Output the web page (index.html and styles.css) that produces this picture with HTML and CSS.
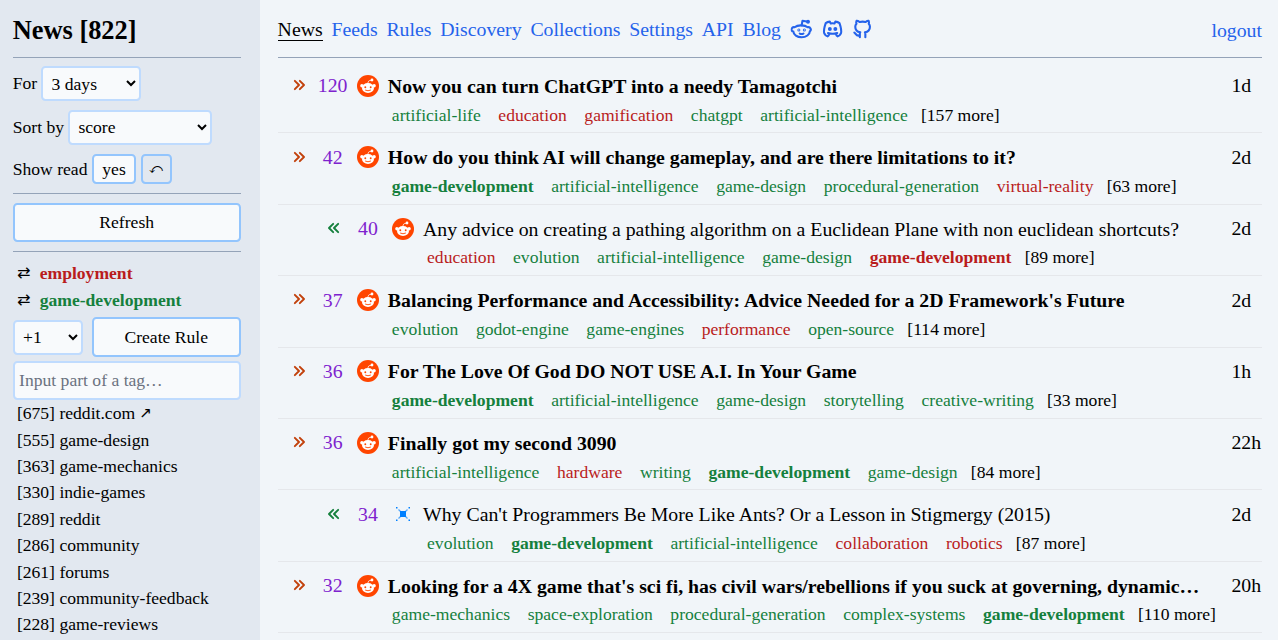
FILE: index.html
```html
<!DOCTYPE html>
<html lang="en">
<head>
<meta charset="utf-8">
<title>News</title>
<link rel="stylesheet" href="styles.css">
</head>
<body>
<svg class="sprite" aria-hidden="true">
  <symbol id="reddit" viewBox="0 0 22 22">
    <circle cx="11" cy="11" r="11" fill="#ff4500"/>
    <path d="M10.900 9C11 6.500 11.500 5.200 14.500 5.300" fill="none" stroke="#fff" stroke-width=".8"/>
    <circle cx="15" cy="5" r="1.400" fill="#fff"/>
    <circle cx="4.900" cy="10.700" r="1.700" fill="#fff"/>
    <circle cx="17.100" cy="10.700" r="1.700" fill="#fff"/>
    <ellipse cx="11" cy="13" rx="6" ry="4.900" fill="#fff"/>
    <circle cx="8.300" cy="12.200" r=".95" fill="#ff4500"/>
    <circle cx="13.700" cy="12.200" r=".95" fill="#ff4500"/>
    <path d="M8.500 15.200Q11 16.500 13.500 15.200" fill="none" stroke="#ff4500" stroke-width=".9" stroke-linecap="round"/>
  </symbol>
  <symbol id="right" viewBox="0 0 24 24"><path d="M7 7l5 5-5 5M13 7l5 5-5 5"/></symbol>
  <symbol id="left" viewBox="0 0 24 24"><path d="M11 7l-5 5 5 5M17 7l-5 5 5 5"/></symbol>
</svg>
<div class="app">
  <aside class="side">
    <h2 class="heading">News [822]</h2>
    <div class="field first"><span>For</span><select class="days"><option>3 days</option></select></div>
    <div class="field"><span>Sort by</span><select class="sort"><option>score</option></select></div>
    <div class="field read"><span>Show read</span><button class="yes">yes</button><button class="undo">⤺</button></div>
    <div class="refresh-box"><button class="refresh">Refresh</button></div>
    <div class="chosen"><span class="swap">⇄</span><b class="neg">employment</b></div>
    <div class="chosen"><span class="swap">⇄</span><b class="pos">game-development</b></div>
    <div class="rule"><select class="delta"><option>+1</option></select><button class="create">Create Rule</button></div>
    <input class="search" placeholder="Input part of a tag…">
    <ul class="counts">
      <li>[675] reddit.com <span class="ext">↗</span></li>
      <li>[555] game-design</li>
      <li>[363] game-mechanics</li>
      <li>[330] indie-games</li>
      <li>[289] reddit</li>
      <li>[286] community</li>
      <li>[261] forums</li>
      <li>[239] community-feedback</li>
      <li>[228] game-reviews</li>
    </ul>
  </aside>
  <main class="main">
    <nav class="nav">
      <a class="current">News</a><a>Feeds</a><a>Rules</a><a>Discovery</a><a>Collections</a><a>Settings</a><a>API</a><a>Blog</a>
      <svg class="brand" viewBox="0 0 24 24"><path d="M12 8c2.648 0 5.028 .826 6.675 2.14a2.5 2.5 0 0 1 2.326 4.36c0 3.59 -4.03 6.5 -9 6.5c-4.875 0 -8.845 -2.8 -9 -6.294l-1 -.206a2.5 2.5 0 0 1 2.326 -4.36c1.646 -1.313 4.026 -2.14 6.674 -2.14z"/><path d="M12 8l1 -5l6 1"/><path d="M19 4m-1 0a1 1 0 1 0 2 0a1 1 0 1 0 -2 0"/><circle cx="9" cy="13" r=".5"/><circle cx="15" cy="13" r=".5"/><path d="M10 17c.667 .333 1.333 .5 2 .5s1.333 -.167 2 -.5"/></svg>
      <svg class="brand" viewBox="0 0 24 24"><path d="M8 12a1 1 0 1 0 2 0a1 1 0 0 0 -2 0M14 12a1 1 0 1 0 2 0a1 1 0 0 0 -2 0M15.5 17c0 1 1.5 3 2 3c1.5 0 2.833 -1.667 3.5 -3c.667 -1.667 .5 -5.833 -1.5 -11.5c-1.457 -1.015 -3 -1.34 -4.5 -1.5l-.972 1.923a11.913 11.913 0 0 0 -4.053 0l-.975 -1.923c-1.5 .16 -3.043 .485 -4.5 1.5c-2 5.667 -2.167 9.833 -1.5 11.5c.667 1.333 2 3 3.5 3c.5 0 2 -2 2 -3M7 16.5c3.5 1 6.5 1 10 0"/></svg>
      <svg class="brand" viewBox="0 0 24 24"><path d="M9 19c-4.3 1.4 -4.3 -2.5 -6 -3m12 5v-3.500c0 -1 .1 -1.400 -.5 -2c2.800 -.3 5.500 -1.400 5.500 -6a4.600 4.600 0 0 0 -1.300 -3.200a4.200 4.200 0 0 0 -.1 -3.200s-1.100 -.3 -3.500 1.300a12.300 12.300 0 0 0 -6.200 0c-2.400 -1.600 -3.500 -1.300 -3.500 -1.300a4.200 4.200 0 0 0 -.1 3.200a4.600 4.600 0 0 0 -1.300 3.200c0 4.600 2.700 5.700 5.500 6c-.6 .6 -.6 1.200 -.5 2v3.500"/></svg>
      <a class="logout">logout</a>
    </nav>
    <article class="row">
      <svg class="chev"><use href="#right"/></svg><span class="score">120</span><svg class="fav"><use href="#reddit"/></svg><h3 class="title">Now you can turn ChatGPT into a needy Tamagotchi</h3><time>1d</time>
      <div class="tags"><i class="pos">artificial-life</i><i class="neg">education</i><i class="neg">gamification</i><i class="pos">chatgpt</i><i class="pos">artificial-intelligence</i><span class="more">[157 more]</span></div>
    </article>
    <article class="row">
      <svg class="chev"><use href="#right"/></svg><span class="score">42</span><svg class="fav"><use href="#reddit"/></svg><h3 class="title">How do you think AI will change gameplay, and are there limitations to it?</h3><time>2d</time>
      <div class="tags"><b class="pos">game-development</b><i class="pos">artificial-intelligence</i><i class="pos">game-design</i><i class="pos">procedural-generation</i><i class="neg">virtual-reality</i><span class="more">[63 more]</span></div>
    </article>
    <article class="row nested">
      <svg class="chev"><use href="#left"/></svg><span class="score">40</span><svg class="fav"><use href="#reddit"/></svg><h3 class="title">Any advice on creating a pathing algorithm on a Euclidean Plane with non euclidean shortcuts?</h3><time>2d</time>
      <div class="tags"><i class="neg">education</i><i class="pos">evolution</i><i class="pos">artificial-intelligence</i><i class="pos">game-design</i><b class="neg">game-development</b><span class="more">[89 more]</span></div>
    </article>
    <article class="row">
      <svg class="chev"><use href="#right"/></svg><span class="score">37</span><svg class="fav"><use href="#reddit"/></svg><h3 class="title">Balancing Performance and Accessibility: Advice Needed for a 2D Framework's Future</h3><time>2d</time>
      <div class="tags"><i class="pos">evolution</i><i class="pos">godot-engine</i><i class="pos">game-engines</i><i class="neg">performance</i><i class="pos">open-source</i><span class="more">[114 more]</span></div>
    </article>
    <article class="row">
      <svg class="chev"><use href="#right"/></svg><span class="score">36</span><svg class="fav"><use href="#reddit"/></svg><h3 class="title">For The Love Of God DO NOT USE A.I. In Your Game</h3><time>1h</time>
      <div class="tags"><b class="pos">game-development</b><i class="pos">artificial-intelligence</i><i class="pos">game-design</i><i class="pos">storytelling</i><i class="pos">creative-writing</i><span class="more">[33 more]</span></div>
    </article>
    <article class="row">
      <svg class="chev"><use href="#right"/></svg><span class="score">36</span><svg class="fav"><use href="#reddit"/></svg><h3 class="title">Finally got my second 3090</h3><time>22h</time>
      <div class="tags"><i class="pos">artificial-intelligence</i><i class="neg">hardware</i><i class="pos">writing</i><b class="pos">game-development</b><i class="pos">game-design</i><span class="more">[84 more]</span></div>
    </article>
    <article class="row nested">
      <svg class="chev"><use href="#left"/></svg><span class="score">34</span><svg class="fav" viewBox="0 0 22 22" fill="#0080ff"><path d="M8 8h6v6H8zM4 4h1.500v1.500H4zM16.500 4H18v1.500h-1.500zM4 16.500h1.500V18H4zM16.500 16.500H18V18h-1.500z"/><path d="M6.500 6.500l9 9M15.500 6.500l-9 9" stroke="#0080ff" stroke-opacity=".65" stroke-width="1.300"/></svg><h3 class="title">Why Can't Programmers Be More Like Ants? Or a Lesson in Stigmergy (2015)</h3><time>2d</time>
      <div class="tags"><i class="pos">evolution</i><b class="pos">game-development</b><i class="pos">artificial-intelligence</i><i class="neg">collaboration</i><i class="neg">robotics</i><span class="more">[87 more]</span></div>
    </article>
    <article class="row">
      <svg class="chev"><use href="#right"/></svg><span class="score">32</span><svg class="fav"><use href="#reddit"/></svg><h3 class="title">Looking for a 4X game that's sci fi, has civil wars/rebellions if you suck at governing, dynamic…</h3><time>20h</time>
      <div class="tags"><i class="pos">game-mechanics</i><i class="pos">space-exploration</i><i class="pos">procedural-generation</i><i class="pos">complex-systems</i><b class="pos">game-development</b><span class="more">[110 more]</span></div>
    </article>
  </main>
</div>
</body>
</html>
```

FILE: styles.css
```css
* { box-sizing: border-box; margin: 0; padding: 0; }
html { font-size: 17.6px; }
body {
  height: 640px; overflow: hidden; background: #f1f5f9; color: #000;
  font-family: "Liberation Serif", "DejaVu Sans", serif; line-height: 1.5;
}
.sprite { display: none; }
.app { display: flex; height: 640px; }

/* Sidebar */
.side { width: 260px; flex: none; padding: 0 19.3px 0 12.7px; background: #e2e8f0; overflow: hidden; }
.heading { height: 58px; padding-top: 12.5px; font-size: 26.4px; line-height: 35.2px; border-bottom: 1px solid #94a3b8; }
.field { display: flex; align-items: center; gap: 4px; height: 35px; margin-top: 9px; white-space: nowrap; }
.first { margin-top: 8px; }
select, button, input { font: inherit; color: #000; background: #f8fafc; border: 2px solid #bfdbfe; border-radius: 4.4px; }
select { height: 35px; padding-left: 4.4px; }
button { border-color: #93c5fd; text-align: center; }
.days { width: 100px; padding-top: 1px; }
.sort { width: 144px; padding-bottom: 1px; }
.field.read { height: 30px; gap: 4.6px; }
.yes { width: 44px; height: 30px; line-height: 26px; }
.undo { width: 31px; height: 30px; line-height: 26px; background: #e2e8f0; font-size: 13px; }
.refresh-box { height: 59px; margin: 9px 0 8px; padding-top: 9px; border: solid #94a3b8; border-width: 1px 0; }
.refresh { display: block; width: 100%; height: 39px; }
.chosen { display: flex; height: 27px; line-height: 27px; padding-left: 4.4px; }
.swap { width: 22.6px; font-size: 16px; line-height: 26px; }
.ext { font-size: 15px; line-height: 1; position: relative; top: -1px; }
.rule { display: flex; align-items: center; gap: 9px; height: 40px; margin-top: 3px; }
.delta { width: 70px; }
.create { flex: 1; height: 40px; }
.search { display: block; width: 100%; height: 39px; margin-top: 4px; padding: 0 4.4px; }
.search::placeholder { color: #6b7280; }
.counts { list-style: none; padding: .2px 0 0 4.2px; line-height: 26.4px; }

/* Top navigation */
.main { flex: 1; min-width: 0; padding: 0 16px 0 17.6px; }
.nav { display: flex; align-items: center; gap: 8.8px; height: 58px; padding-top: 1px; margin-bottom: 4px; border-bottom: 1px solid #94a3b8; font-size: 19.8px; line-height: 22px; color: #2563eb; }
.current { color: #000; border-bottom: 1px solid #000; }
.brand { width: 22px; height: 22px; transform: translateX(.6px); }
.brand, .chev { fill: none; stroke: currentColor; stroke-width: 2.3; stroke-linecap: round; stroke-linejoin: round; }
.logout { margin-left: auto; padding-top: 2px; }

/* News list */
.row {
  display: grid; grid-template-columns: 20px 31.2px 22px 1fr 30.6px; grid-template-rows: 32.6px 26.4px;
  column-gap: 8.8px; align-items: center; align-content: start; height: 71.4px; padding: 8px 0 0 10.7px; border-bottom: 1px solid #e5e7eb;
}
.nested { padding-left: 45.9px; }
.chev { width: 20px; height: 20px; margin: 0 0 2px .5px; color: #c2410c; }
.nested .chev { color: #15803d; }
.score { font-size: 19.8px; text-align: center; color: #7e22ce; }
.fav { width: 22px; height: 22px; margin-bottom: 1px; }
.title { font-size: 19.8px; line-height: 30.8px; white-space: nowrap; }
.nested .title { font-weight: 400; }
time { font-size: 19.8px; white-space: nowrap; }
.tags { grid-column: 4 / 6; display: flex; gap: 17.6px; margin-top: -2px; padding-left: 4px; white-space: nowrap; }
.tags i { font-style: normal; }
.more { margin-left: -4.4px; }
.pos { color: #15803d; }
.neg { color: #b91c1c; }
```
